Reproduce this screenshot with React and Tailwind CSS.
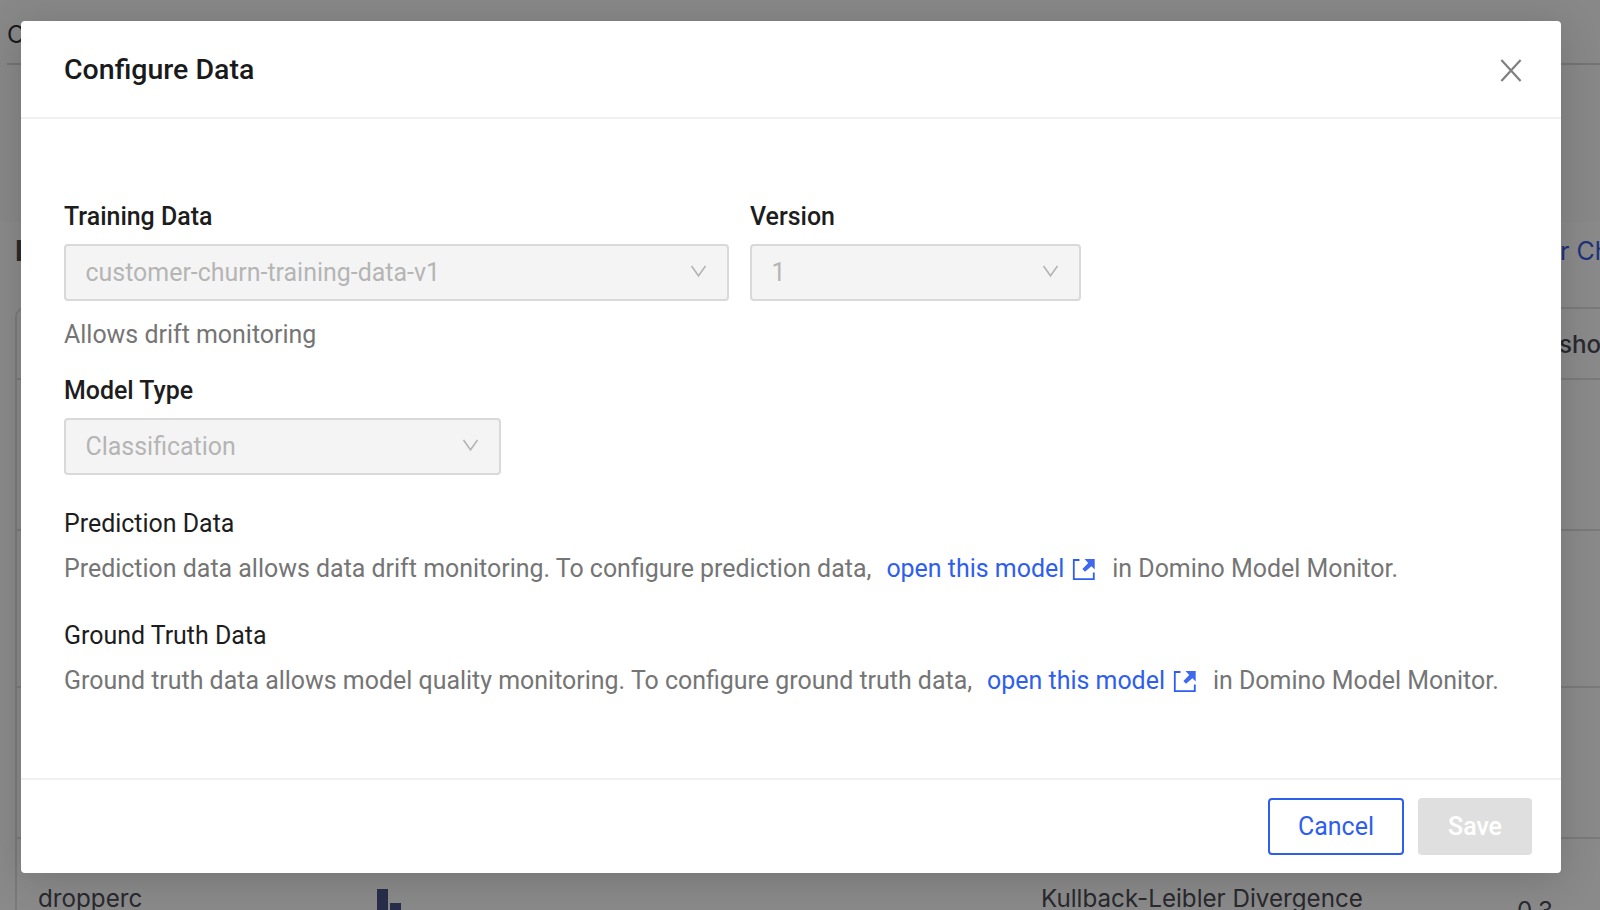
import { useState } from "react";

const ROWS = ["h-[151px]", "h-[157px]", "h-[151px]"];

function ChevronDown() {
  return (
    <svg width="17" height="13" viewBox="0 0 17 13" fill="none" stroke="#b5b5b5" strokeWidth="1.6" className="flex-shrink-0 mb-[3px]">
      <path d="M1.5 1 L8.5 10.8 L15.5 1" />
    </svg>
  );
}

function CloseIcon() {
  return (
    <svg width="22" height="23" viewBox="0 0 22 23" fill="none" stroke="#808080" strokeWidth="2.2">
      <path d="M1.4 1 L20.6 22 M20.6 1 L1.4 22" />
    </svg>
  );
}

function OpenIcon() {
  return (
    <svg width="23" height="23" viewBox="0 0 23 23" className="flex-shrink-0 ml-[8px] mr-[17px]">
      <path d="M7.5 2 H1.8 V21.2 H21.8 V14.5" fill="none" stroke="#2e5eee" strokeWidth="1.8" />
      <path d="M12.5 1 H22.7 V11.5 L19.4 8.2 L13 13.8 L10.4 11 L16.2 5 Z" fill="#4068ee" />
    </svg>
  );
}

function Select({ label, value, width }) {
  return (
    <div className={width}>
      <label className="block h-[46px] pt-px leading-[36px] font-medium text-[#1d1d20]">{label}</label>
      <button disabled className="w-full h-[57px] flex items-center justify-between pl-[19.5px] pr-[20px] border-2 border-[#d9d9d9] rounded-[4px] bg-[#f4f4f4] text-[#b5b5b5]">
        <span>{value}</span>
        <ChevronDown />
      </button>
    </div>
  );
}

function DataNote({ title, text }) {
  return (
    <section className="h-[112px]">
      <h3 className="h-[45px] leading-[36px] text-[#1d1d20]">{title}</h3>
      <p className="flex items-center h-[36px] whitespace-nowrap text-[#757575]">
        <span>{text}</span>
        <a href="#" className="ml-[15px] text-[#2e5eee]">open this model</a>
        <OpenIcon />
        <span>in Domino Model Monitor.</span>
      </p>
    </section>
  );
}

function Page() {
  return (
    <div className="h-full flex flex-col bg-[#f8f8f8] text-[24.2px] text-[#4b4c55] font-[Inter,sans-serif]">
      <div className="h-[65px] ml-[7px] pt-[17px] leading-[36px] border-b-2 border-[#d4d4d4] text-[#2e2e38] flex-shrink-0">O</div>
      <div className="h-[157px] flex-shrink-0" />
      <div className="flex-1 pl-[15px] bg-[#fbfbfb]">
        <div className="h-[85px] flex items-start justify-between pt-[13px] leading-[32px]">
          <h2 className="font-bold text-[28px]">D</h2>
          <span className="w-[40px] whitespace-nowrap text-[25px] text-[#3b5bdc]">r Ch</span>
        </div>
        <div className="border-t-2 border-l-2 border-[#dedede] rounded-tl-[10px]">
          <div className="h-[71px] flex justify-end items-center pt-[3px] border-b-2 border-[#dedede] font-medium">
            <span className="w-[41px] whitespace-nowrap">sho</span>
          </div>
          {ROWS.map((h) => <div key={h} className={`${h} border-b-2 border-[#dedede]`} />)}
          <div className="h-[150px] flex pt-[42px] pl-[21px] leading-[36px]">
            <span className="w-[339px]">dropperc</span>
            <div className="w-[664px] flex items-start gap-[2px] pt-[8px]">
              <div className="w-[11px] h-[100px] bg-[#4a5488]" />
              <div className="w-[11px] h-[86px] mt-[14px] bg-[#4a5488]" />
            </div>
            <span className="w-[476px] whitespace-nowrap">Kullback-Leibler Divergence</span>
            <span className="pt-[12px]">0.3</span>
          </div>
        </div>
      </div>
    </div>
  );
}

export default function App() {
  const [open, setOpen] = useState(true);

  return (
    <div className="relative w-[1600px] h-[910px] overflow-hidden">
      <Page />
      {open && (
        <div className="absolute inset-0 pt-[21px] pl-[21px] bg-black/45">
          <div role="dialog" className="w-[1540px] h-[852px] flex flex-col rounded-[4px] bg-white shadow-[0_6px_40px_rgba(0,0,0,0.16)] font-[Roboto,sans-serif] text-[24.94px]">
            <header className="h-[98px] flex items-center justify-between pt-[2px] pl-[43px] pr-[39px] border-b-2 border-[#f0f0f0]">
              <h1 className="text-[28.5px] font-medium text-[#1a1a1c]">Configure Data</h1>
              <button onClick={() => setOpen(false)} aria-label="Close"><CloseIcon /></button>
            </header>
            <div className="flex-1 pt-[79px] pl-[43px]">
              <div className="flex gap-[21px]">
                <Select label="Training Data" value="customer-churn-training-data-v1" width="w-[665px]" />
                <Select label="Version" value="1" width="w-[331px]" />
              </div>
              <p className="h-[71px] pt-[16px] leading-[36px] text-[#757575]">Allows drift monitoring</p>
              <Select label="Model Type" value="Classification" width="w-[437px]" />
              <div className="pt-[31px]">
                <DataNote title="Prediction Data" text="Prediction data allows data drift monitoring. To configure prediction data," />
                <DataNote title="Ground Truth Data" text="Ground truth data allows model quality monitoring. To configure ground truth data," />
              </div>
            </div>
            <footer className="h-[95px] flex items-start justify-end gap-[14px] pt-[18px] pr-[29px] border-t-2 border-[#f0f0f0]">
              <button onClick={() => setOpen(false)} className="w-[136px] h-[57px] border-2 border-[#2e5eee] rounded-[4px] text-[#2e5eee]">Cancel</button>
              <button disabled className="w-[114px] h-[57px] rounded-[4px] bg-[#dfdfdf] font-medium text-white">Save</button>
            </footer>
          </div>
        </div>
      )}
    </div>
  );
}
